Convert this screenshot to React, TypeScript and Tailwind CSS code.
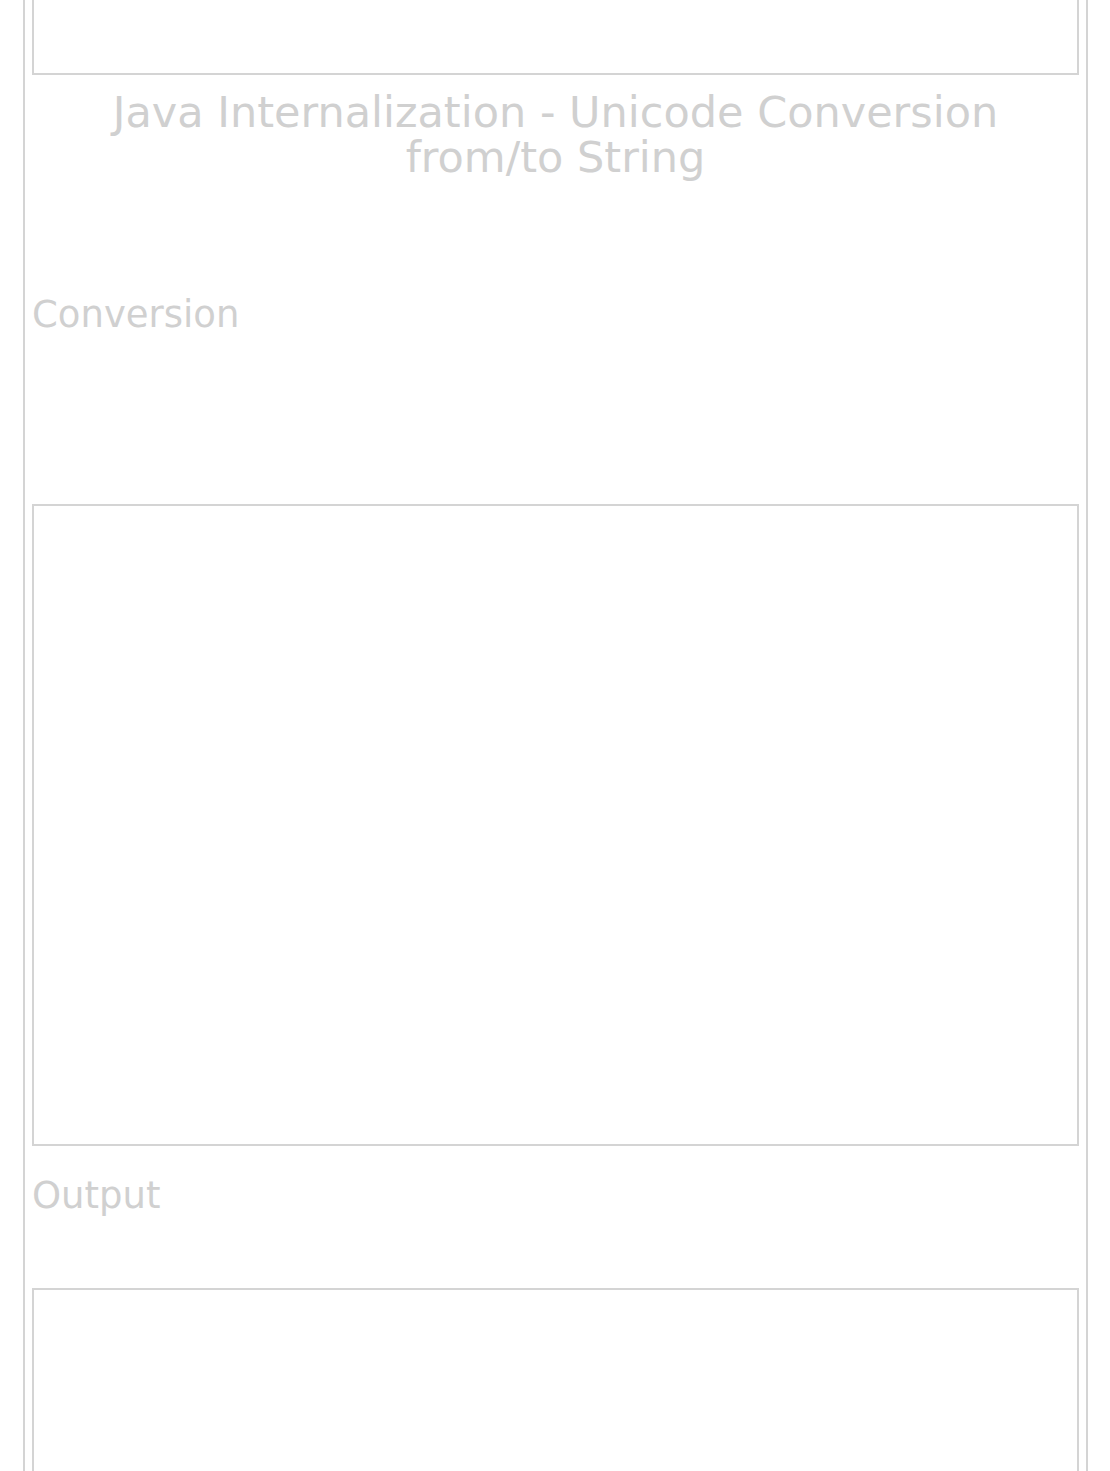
export default function App() {
    return (
        <div className="min-h-screen bg-white" style={{ fontFamily: '"DejaVu Sans", Verdana, sans-serif' }}>
            <div className="ml-[23px] w-[1065px] border-x-2 border-[#d4d4d4] px-[7px] pb-10">
                {/* top box, cut off by the window */}
                <div className="h-[75px] border-2 border-t-0 border-[#d4d4d4]"></div>

                <h1 className="mt-[15px] text-center text-[43px] leading-[45px] text-[#d0d0d0]">
                    Java Internalization - Unicode Conversion
                    <br />
                    from/to String
                </h1>

                <h2 className="mt-[115px] text-[37px] leading-[40px] text-[#d0d0d0]">Conversion</h2>

                {/* input area */}
                <div className="mt-[169px] h-[642px] border-2 border-[#d4d4d4]"></div>

                <h2 className="mt-[30px] text-[37px] leading-[40px] text-[#d0d0d0]">Output</h2>

                {/* output area */}
                <div className="mt-[72px] h-[300px] border-2 border-[#d4d4d4]"></div>
            </div>
        </div>
    );
}
